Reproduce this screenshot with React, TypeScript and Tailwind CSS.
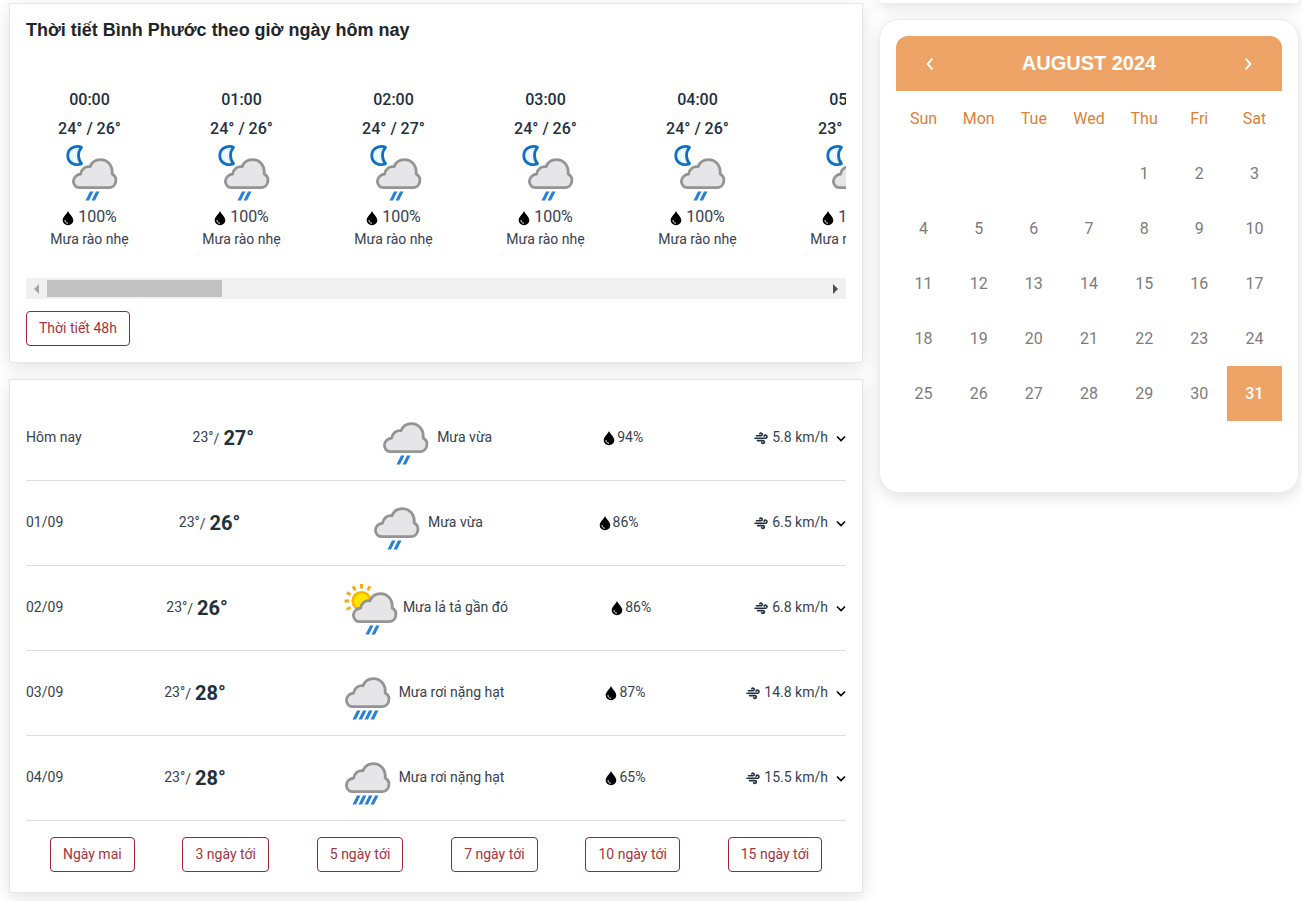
import { useState } from "react";

const HOURS = [
  { time: "00:00", low: 24, high: 26 },
  { time: "01:00", low: 24, high: 26 },
  { time: "02:00", low: 24, high: 27 },
  { time: "03:00", low: 24, high: 26 },
  { time: "04:00", low: 24, high: 26 },
  { time: "05:00", low: 23, high: 26 },
];

const DAYS = [
  { date: "Hôm nay", low: 23, high: 27, icon: "rain", text: "Mưa vừa", humidity: 94, wind: "5.8" },
  { date: "01/09", low: 23, high: 26, icon: "rain", text: "Mưa vừa", humidity: 86, wind: "6.5" },
  { date: "02/09", low: 23, high: 26, icon: "sun", text: "Mưa lả tả gần đó", humidity: 86, wind: "6.8" },
  { date: "03/09", low: 23, high: 28, icon: "heavy", text: "Mưa rơi nặng hạt", humidity: 87, wind: "14.8" },
  { date: "04/09", low: 23, high: 28, icon: "heavy", text: "Mưa rơi nặng hạt", humidity: 65, wind: "15.5" },
];

const RANGES = ["Ngày mai", "3 ngày tới", "5 ngày tới", "7 ngày tới", "10 ngày tới", "15 ngày tới"];

const WEEKDAYS = ["Sun", "Mon", "Tue", "Wed", "Thu", "Fri", "Sat"];

// August 2024 starts on a Thursday
const WEEKS = [0, 1, 2, 3, 4, 5].map((w) =>
  WEEKDAYS.map((_, d) => {
    const day = w * 7 + d - 3;
    return day > 0 && day <= 31 ? day : null;
  })
);

const SUN_RAYS = [-120, -90, -60, -30, 0, 30];

function WeatherIcon({ kind }: { kind: string }) {
  const shift = kind === "night" ? -2 : kind === "sun" ? 3 : 0;
  const drops = kind === "heavy" ? [26, 32, 38, 44] : [32, 38];

  return (
    <svg width="68" height="64" viewBox="0 0 68 64" className="shrink-0" aria-hidden="true">
      {kind === "night" && (
        <path
          d="M25.5 6.3C23.5 5.300 20.500 5.200 17.800 6.100a9 9 0 0 0 0 17c2.700.9 5.700.6 7.700-.4C21.500 18 21.500 11 25.500 6.300z"
          fill="#eef7fd"
          stroke="#0f6fc6"
          strokeWidth="2.800"
          strokeLinejoin="round"
        />
      )}
      {kind === "sun" && (
        <g>
          <circle cx="30.500" cy="26" r="8.800" fill="#ffe600" stroke="#fbb500" strokeWidth="2.600" />
          {SUN_RAYS.map((a) => (
            <line
              key={a}
              x1="30.500"
              y1="13.500"
              x2="30.500"
              y2="9"
              stroke="#f2ab1f"
              strokeWidth="3"
              transform={`rotate(${a} 30.5 26)`}
            />
          ))}
        </g>
      )}
      <g transform={`translate(${shift} 0)`}>
        <path
          d="M26 46.700h29a6.800 7.200 0 0 0 3.200-13.600C59 24 53 18.600 46.500 18.600c-4.700 0-8.800 2.700-10.500 7.200-4.800-.7-8.700 2.400-9.300 7.200C22.500 33.700 19.400 36.500 19.400 40.300c0 3.700 2.900 6.400 6.600 6.400z"
          fill="#e6e6e8"
          stroke="#949494"
          strokeWidth="2.800"
          strokeLinejoin="round"
        />
        {drops.map((x) => (
          <path key={x} d={`M${x + 4} 50.5h3.500l-4.500 9h-3.500z`} fill="#2a80d2" />
        ))}
      </g>
    </svg>
  );
}

function Droplet() {
  return (
    <svg width="12" height="16" viewBox="0 0 12 16" className="mt-0.5 shrink-0" aria-hidden="true">
      <path d="M6 1C6.800 3.500 11.300 7 11.300 10.300a5.300 5 0 0 1-10.600 0C.700 7 5.200 3.500 6 1z" fill="#000" />
      <path d="M3 10.500c.1 1.500 1 2.500 2.500 2.700" fill="none" stroke="#fff" strokeWidth="1" strokeLinecap="round" />
    </svg>
  );
}

function Wind() {
  return (
    <svg
      width="14"
      height="14"
      viewBox="0 0 14 14"
      fill="none"
      stroke="#222f3e"
      strokeWidth="1.600"
      strokeLinecap="round"
      className="mt-0.5 shrink-0"
      aria-hidden="true"
    >
      <path d="M2.500 4.800h4.500a1.300 1.300 0 1 0-1.200-1.900" />
      <path d="M1 7.200h10.500a1.500 1.500 0 1 0-1.400-2.100" />
      <path d="M3.500 9.600h5.500a1.400 1.400 0 1 1-1.300 2" />
    </svg>
  );
}

function Chevron({ d, size }: { d: string; size: string }) {
  return (
    <svg className={size} viewBox="0 0 10 10" fill="none" stroke="currentColor" strokeWidth="1.600" aria-hidden="true">
      <path d={d} />
    </svg>
  );
}

function OutlineButton({ label }: { label: string }) {
  return (
    <a
      href="#"
      className="inline-block rounded-[4px] border border-[#9f2433] px-3 py-1.5 text-sm leading-[21px] text-[#a53340] hover:bg-red-50"
    >
      {label}
    </a>
  );
}

function HourlyForecast() {
  return (
    <section className="border border-[#e6e6e6] bg-white p-4 shadow-[0_4px_16px_rgba(0,0,0,0.12)]">
      <h2 className="font-['Liberation_Sans',sans-serif] text-lg leading-5 font-bold text-[#212529]">
        Thời tiết Bình Phước theo giờ ngày hôm nay
      </h2>
      <ul className="mt-12 flex gap-[25px] overflow-hidden">
        {HOURS.map((h) => (
          <li key={h.time} className="flex w-[127px] shrink-0 flex-col items-center">
            <p className="font-medium text-[#222f3e]">{h.time}</p>
            <p className="mt-[5px] font-medium text-[#222f3e]">
              {h.low}° / {h.high}°
            </p>
            <WeatherIcon kind="night" />
            <p className="flex items-center gap-1">
              <Droplet />
              100%
            </p>
            <p className="text-sm leading-[21px]">Mưa rào nhẹ</p>
          </li>
        ))}
      </ul>
      <div className="mt-7 flex h-[21px] items-center bg-[#f0f0f0]">
        <button aria-label="Cuộn trái" className="flex h-full w-[21px] items-center justify-center">
          <svg width="5" height="10" viewBox="0 0 5 10">
            <path d="M5 0v10L0 5z" fill="#a3a3a3" />
          </svg>
        </button>
        <div className="h-[17px] w-[175px] bg-[#c1c1c1]" />
        <button aria-label="Cuộn phải" className="ml-auto flex h-full w-[21px] items-center justify-center">
          <svg width="5" height="10" viewBox="0 0 5 10">
            <path d="M0 0v10l5-5z" fill="#505050" />
          </svg>
        </button>
      </div>
      <div className="mt-3 flex">
        <OutlineButton label="Thời tiết 48h" />
      </div>
    </section>
  );
}

function DailyForecast() {
  const [open, setOpen] = useState("");

  return (
    <section className="mt-4 border border-[#e6e6e6] bg-white px-4 pt-4 pb-5 shadow-[0_4px_16px_rgba(0,0,0,0.12)]">
      {DAYS.map((d) => (
        <button
          key={d.date}
          aria-expanded={open === d.date}
          onClick={() => setOpen(open === d.date ? "" : d.date)}
          className="flex w-full items-center justify-between border-b border-[#dedede] pt-[9px] pb-[11px] text-left text-sm"
        >
          <span>{d.date}</span>
          <span className="flex items-center">
            {d.low}°<span className="mt-1">/</span>
            <b className="mt-0.5 ml-1 text-xl leading-6 font-bold text-[#222f3e]">{d.high}°</b>
          </span>
          <span className="flex items-center gap-1">
            <WeatherIcon kind={d.icon} />
            {d.text}
          </span>
          <span className="flex items-center gap-0.5">
            <Droplet />
            {d.humidity}%
          </span>
          <span className="flex items-center">
            <Wind />
            <span className="mr-2 ml-1">{d.wind} km/h</span>
            <Chevron d="M1 3.500 5 7.500 9 3.500" size="mt-0.5 size-2.5 text-black" />
          </span>
        </button>
      ))}
      <nav className="mt-4 flex justify-around">
        {RANGES.map((r) => (
          <OutlineButton key={r} label={r} />
        ))}
      </nav>
    </section>
  );
}

function Calendar() {
  return (
    <section className="mt-4 rounded-[20px] border border-[#ececec] bg-white p-4 shadow-[0_4px_16px_rgba(0,0,0,0.12)]">
      <header className="flex h-[55px] items-center justify-between rounded-t-xl bg-[#eda365] px-7 text-white">
        <button aria-label="Previous month">
          <Chevron d="M7 .500 3 5 7 9.500" size="size-3" />
        </button>
        <h3 className="pb-0.5 font-['Liberation_Sans',sans-serif] text-xl font-bold">AUGUST 2024</h3>
        <button aria-label="Next month">
          <Chevron d="M3 .500 7 5 3 9.500" size="size-3" />
        </button>
      </header>
      <table className="w-full table-fixed text-center">
        <thead>
          <tr>
            {WEEKDAYS.map((d) => (
              <th key={d} className="h-[55px] p-0 font-normal text-[#dc7f3b]">
                {d}
              </th>
            ))}
          </tr>
        </thead>
        <tbody className="text-[#7c7c7c]">
          {WEEKS.map((week, i) => (
            <tr key={i}>
              {week.map((day, j) => (
                <td key={j} className={day === 31 ? "h-[55px] bg-[#eda365] p-0 font-medium text-white" : "h-[55px] p-0"}>
                  {day}
                </td>
              ))}
            </tr>
          ))}
        </tbody>
      </table>
    </section>
  );
}

export default function App() {
  return (
    <div className="overflow-hidden bg-white font-[Roboto,sans-serif] text-base leading-6 text-[#36414f]">
      <div className="flex items-start gap-4 pr-[3px] pb-2 pl-[9px]">
        <main className="min-w-0 flex-1 pt-[3px]">
          <HourlyForecast />
          <DailyForecast />
        </main>
        <aside className="w-[420px] shrink-0">
          {/* tail of the previous sidebar card */}
          <div className="-mt-20 h-[83px] rounded-b bg-white shadow-[0_4px_16px_rgba(0,0,0,0.12)]" />
          <Calendar />
        </aside>
      </div>
    </div>
  );
}
